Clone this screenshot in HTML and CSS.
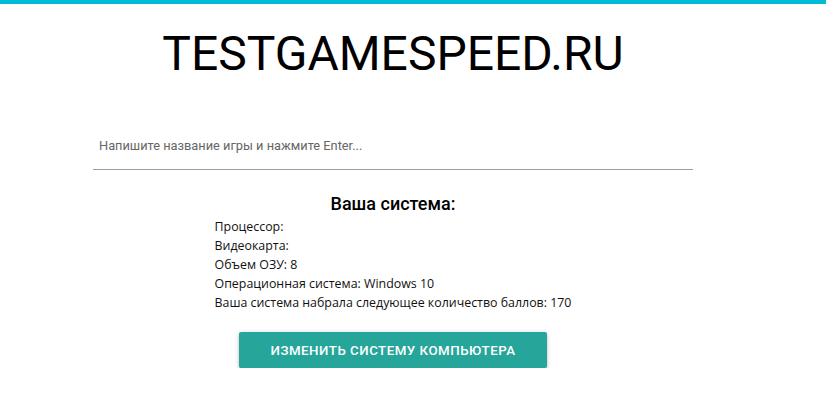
FILE: index.html
```html
<!DOCTYPE html>
<html>

<head>
  <meta charset="utf-8">
  <title>testgamespeed</title>
  <link rel="stylesheet" href="styles.css">
</head>

<body>
  <div class="top-line"></div>

  <div class="page">
    <h1 class="logo">TESTGAMESPEED.RU</h1>

    <div class="search">
      <input type="text" class="search-input" placeholder="Напишите название игры и нажмите Enter...">
    </div>

    <div class="system">
      <h3 class="system-title">Ваша система:</h3>
      <ul class="system-list">
        <li>Процессор:</li>
        <li>Видеокарта:</li>
        <li>Объем ОЗУ: 8</li>
        <li>Операционная система: Windows 10</li>
        <li>Ваша система набрала следующее количество баллов: 170</li>
      </ul>
      <div class="system-actions">
        <button class="btn">Изменить систему компьютера</button>
      </div>
    </div>
  </div>
</body>

</html>
```

FILE: styles.css
```css
html {
  --teal: #26a69a;
  --cyan: #00bcd4;
}

body {
  margin: 0;
  font-family: Roboto, "Noto Sans", sans-serif;
  color: #000;
  background: #fff;
}

.top-line {
  height: 4px;
  background: var(--cyan);
}

.page {
  width: 600px;
  padding-left: 93px;
}

.logo {
  margin: 21px 0 0;
  font-size: 48px;
  font-weight: 400;
  line-height: 1.2;
  text-align: center;
}

.search {
  margin-top: 39px;
}

.search-input {
  display: block;
  box-sizing: border-box;
  width: 100%;
  height: 48px;
  margin: 0;
  padding: 0 6px;
  border: none;
  border-bottom: 1px solid #9e9e9e;
  outline: none;
  font-family: Roboto, sans-serif;
  font-size: 12.8px;
  background: transparent;
}

.search-input::placeholder {
  color: #666;
}

.system {
  margin-top: 23px;
  text-align: center;
}

.system-title {
  margin: 0;
  font-size: 18px;
  font-weight: 500;
  line-height: 1.2;
}

.system-list {
  display: inline-block;
  margin: 3px 0 0;
  padding: 0;
  list-style: none;
  text-align: left;
  font-family: "Open Sans", "Noto Sans", sans-serif;
  font-size: 12.4px;
  line-height: 19px;
  color: #111;
}

.system-actions {
  margin-top: 20px;
}

.btn {
  height: 36px;
  padding: 0 32px;
  border: none;
  border-radius: 2px;
  background: var(--teal);
  color: #fff;
  font-family: Roboto, sans-serif;
  font-size: 13.3px;
  font-weight: 500;
  letter-spacing: .5px;
  text-transform: uppercase;
  box-shadow: 0 2px 2px 0 rgba(0, 0, 0, 0.14), 0 3px 1px -2px rgba(0, 0, 0, 0.12), 0 1px 5px 0 rgba(0, 0, 0, 0.2);
}
```
